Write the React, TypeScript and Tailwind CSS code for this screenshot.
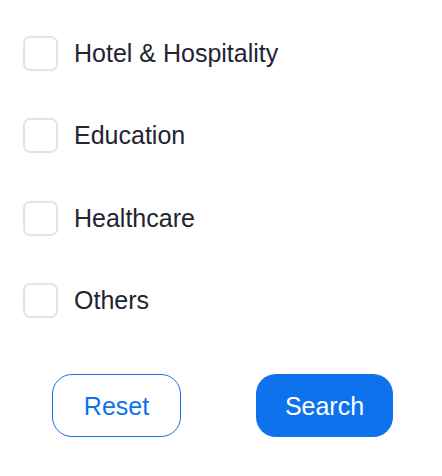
const items = ['Hotel & Hospitality', 'Education', 'Healthcare', 'Others']

export default function App() {
  return (
    <div className="w-[442px] h-[476px] bg-white font-['Liberation_Sans',Arial,sans-serif]">
      <div className="pt-[12px] pl-[23px]">
        {items.map(label => (
          <label key={label} className="flex items-center h-[82.5px] cursor-pointer">
            <span className="w-[35px] h-[35px] rounded-[7px] border-2 border-[#e3e4e8] bg-white shrink-0" />
            <span className="ml-[16px] text-[25px] leading-none text-[#232333]">{label}</span>
          </label>
        ))}
      </div>
      <div className="flex mt-[32px] pl-[52px] gap-[75px]">
        <button className="w-[129px] h-[63px] pt-[3px] rounded-[20px] border border-[#0e72ed] bg-white text-[#0e72ed] text-[25px]">
          Reset
        </button>
        <button className="w-[137px] h-[63px] pt-[3px] rounded-[20px] bg-[#0e72ed] text-white text-[25px]">
          Search
        </button>
      </div>
    </div>
  )
}
